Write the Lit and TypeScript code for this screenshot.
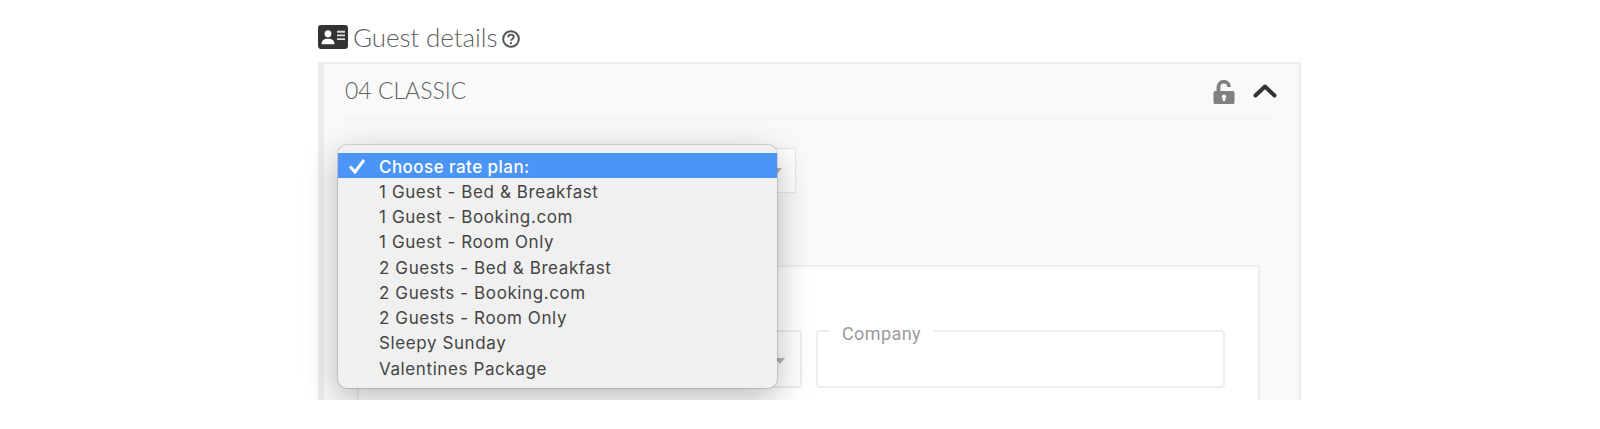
import { LitElement, html, css } from "lit";
import { customElement } from "lit/decorators.js";

const OPTIONS = [
  "1 Guest - Bed & Breakfast",
  "1 Guest - Booking.com",
  "1 Guest - Room Only",
  "2 Guests - Bed & Breakfast",
  "2 Guests - Booking.com",
  "2 Guests - Room Only",
  "Sleepy Sunday",
  "Valentines Package",
];

@customElement("app-root")
export class AppRoot extends LitElement {
  static styles = css`
    :host {
      display: block;
      height: 429px;
      background: #fff;
      font-family: "Lato", "Liberation Sans", sans-serif;
    }
    .page {
      position: relative;
      height: 400px;
      overflow: hidden;
      padding-left: 318px;
      box-sizing: border-box;
    }
    .title {
      display: flex;
      align-items: center;
      height: 62px;
      padding-top: 12px;
      box-sizing: border-box;
      color: #5f5f5f;
      font-size: 26px;
      font-weight: 300;
      letter-spacing: -0.1px;
    }
    .id-icon {
      width: 30px;
      height: 24px;
      margin-right: 5px;
      flex: none;
    }
    .help-icon {
      width: 18px;
      height: 18px;
      margin-left: 5px;
      margin-top: 3px;
      flex: none;
    }
    .card {
      width: 983px;
      height: 338px;
      box-sizing: border-box;
      background: #f9f9f9;
      border-top: 2px solid #ececec;
      border-left: 6px solid #ececec;
      border-right: 2px solid #ececec;
      padding: 0 25px 0 21px;
    }
    .card-head {
      display: flex;
      align-items: center;
      height: 55px;
      box-sizing: border-box;
      border-bottom: 1px solid #f0f0f0;
      color: #5f5f5f;
      font-size: 23px;
      font-weight: 300;
    }
    .card-name {
      flex: 1;
      margin-top: -2px;
    }
    .lock {
      width: 24px;
      height: 24px;
      margin-right: 17px;
      margin-top: 1px;
    }
    .chevron {
      width: 24px;
      height: 14px;
      margin-right: -3px;
    }
    .rate-select {
      position: relative;
      width: 451px;
      height: 45px;
      margin-top: 29px;
      box-sizing: border-box;
      background: #fff;
      border: 1px solid #e8e8e8;
    }
    .arrow {
      position: absolute;
      width: 0;
      height: 0;
      border-left: 5px solid transparent;
      border-right: 5px solid transparent;
      border-top: 6px solid #b4b4b4;
      right: 13px;
      top: 19px;
    }
    .panel {
      margin: 72px 14px 0 12px;
      height: 135px;
      box-sizing: border-box;
      background: #fff;
      border: 2px solid #eeeeee;
      border-bottom: 0;
      padding: 63px 33px 0 17px;
      display: flex;
      gap: 14px;
    }
    .field {
      position: relative;
      height: 58px;
      box-sizing: border-box;
      border: 2px solid #ededed;
      border-radius: 4px;
      background: #fff;
    }
    .field.type {
      flex: none;
      width: 426px;
    }
    .field.type .arrow {
      right: 15px;
      top: 26px;
    }
    .field.company {
      flex: 1;
    }
    .legend {
      position: absolute;
      top: -8px;
      left: 11px;
      padding: 0 13px;
      background: linear-gradient(#fff, #fff) top / 100% 10px no-repeat;
      color: #9b9b9b;
      font-family: "Roboto", "Liberation Sans", sans-serif;
      font-size: 18px;
      letter-spacing: 0.4px;
      line-height: 20px;
    }
    .menu {
      position: absolute;
      left: 338px;
      top: 145px;
      width: 439px;
      box-sizing: border-box;
      padding: 8px 0 8px;
      background: #f0f0f0;
      border-radius: 9px;
      box-shadow: 0 0 0 1px rgba(0, 0, 0, 0.13), 0 10px 34px rgba(0, 0, 0, 0.28);
      color: #444;
      font-family: "Inter", "Liberation Sans", sans-serif;
      font-size: 17px;
      letter-spacing: 0.6px;
    }
    .opt {
      height: 25.25px;
      box-sizing: border-box;
      padding-top: 1.5px;
      line-height: 24px;
      padding-left: 41px;
      position: relative;
      white-space: nowrap;
    }
    .opt.sel {
      background: #4b94f8;
      color: #fff;
      font-weight: 500;
      letter-spacing: 0.45px;
    }
    .check {
      position: absolute;
      left: 10px;
      top: 5px;
      width: 18px;
      height: 16px;
    }
  `;

  render() {
    return html`
      <div class="page">
        <div class="title">
          <svg class="id-icon" viewBox="0 0 30 23" preserveAspectRatio="none">
            <rect width="30" height="23" rx="3" fill="#333" />
            <circle cx="10" cy="8.500" r="3.400" fill="#fff" />
            <path d="M3.500 18.500c0-3.600 2.400-5.300 6.500-5.300s6.500 1.700 6.500 5.300z" fill="#fff" />
            <path d="M19 6.500h8M19 10h8M19 13.500h8" stroke="#ddd" stroke-width="1.800" />
          </svg>
          <span>Guest details</span>
          <svg class="help-icon" viewBox="0 0 17 17" fill="none" stroke="#555">
            <circle cx="8.500" cy="8.500" r="7.400" stroke-width="1.900" />
            <path d="M5.900 6.800c0-1.600 1.200-2.400 2.600-2.400s2.600.8 2.600 2.200c0 1.900-2.600 1.900-2.600 3.600" stroke-width="1.700" />
            <path d="M8.500 11.500v1.800" stroke-width="1.900" />
          </svg>
        </div>
        <div class="card">
          <div class="card-head">
            <span class="card-name">04 CLASSIC</span>
            <svg class="lock" viewBox="0 0 24 24">
              <path d="M6.500 12V7a5.300 5.300 0 0 1 10.600 0" fill="none" stroke="#808080" stroke-width="3.800" />
              <path fill="#808080" fill-rule="evenodd" d="M3 11h18a1.500 1.500 0 0 1 1.500 1.500V22.500a1.500 1.500 0 0 1-1.500 1.500H3a1.500 1.500 0 0 1-1.500-1.500V12.500A1.500 1.500 0 0 1 3 11zM12 14.500a2.200 2.200 0 0 0-1.300 4V21h2.600v-2.500a2.200 2.200 0 0 0-1.300-4z" />
            </svg>
            <svg class="chevron" viewBox="0 0 24 14">
              <path d="M2.500 11.500 12 2.500l9.500 9" fill="none" stroke="#333" stroke-width="4" stroke-linecap="round" stroke-linejoin="round" />
            </svg>
          </div>
          <div class="rate-select"><span class="arrow"></span></div>
          <div class="panel">
            <div class="field type"><span class="arrow"></span></div>
            <div class="field company"><span class="legend">Company</span></div>
          </div>
        </div>
        <div class="menu">
          <div class="opt sel">
            <svg class="check" viewBox="0 0 18 16">
              <path d="M2 8.500l5 5.500L16 2" fill="none" stroke="#fff" stroke-width="3" />
            </svg>
            Choose rate plan:
          </div>
          ${OPTIONS.map((o) => html`<div class="opt">${o}</div>`)}
        </div>
      </div>
    `;
  }
}
